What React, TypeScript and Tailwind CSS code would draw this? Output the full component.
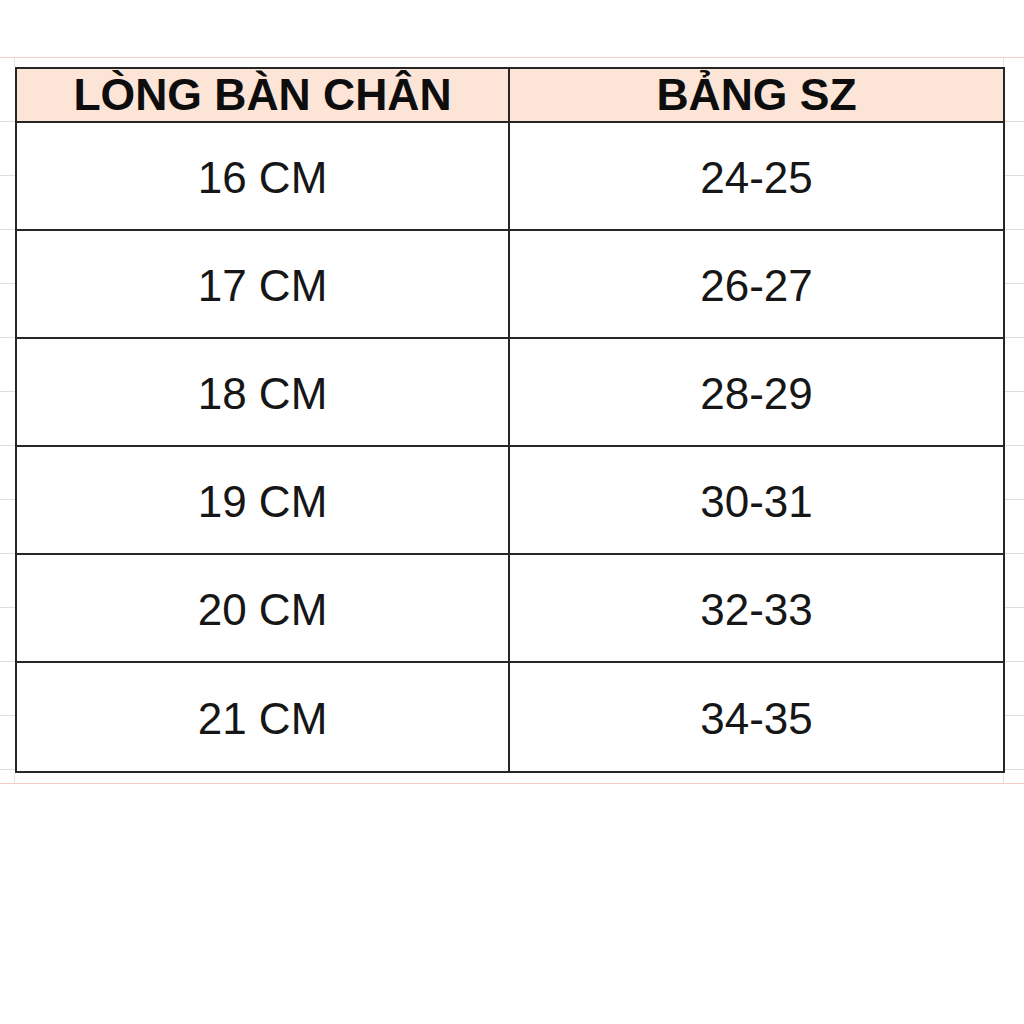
import React from "react";

const rows: [string, string][] = [
  ["16 CM", "24-25"],
  ["17 CM", "26-27"],
  ["18 CM", "28-29"],
  ["19 CM", "30-31"],
  ["20 CM", "32-33"],
  ["21 CM", "34-35"],
];

function MarginColumn({ className }: { className: string }) {
  return (
    <div className={"flex flex-col " + className}>
      <div className="h-[55px] border-b border-[#dedede]" />
      {Array.from({ length: 12 }).map((_, i) => (
        <div key={i} className="h-[54px] shrink-0 border-b border-[#dedede]" />
      ))}
    </div>
  );
}

export default function App() {
  return (
    <div
      className="w-[1024px] h-[1024px] bg-white overflow-hidden"
      style={{ fontFamily: '"Liberation Sans", Arial, sans-serif' }}
    >
      <div className="h-[57px]" />
      <div className="h-px bg-[#f4cccc]" />
      <div className="flex h-[9px]">
        <div className="w-[15px] border-r border-[#e2e2e2]" />
        <div className="w-[989px] border-r border-[#e2e2e2]" />
        <div className="flex-1" />
      </div>
      <div className="flex">
        <MarginColumn className="w-[15px]" />
        <div className="w-[990px] border-2 border-[#262626] flex flex-col">
          <div className="flex h-[54px] border-b-2 border-[#262626] bg-[#fce4d6]">
            <div className="w-[493px] border-r-2 border-[#262626] flex items-center justify-center text-[44.5px] leading-none font-bold text-[#0d0d0d]">
              LÒNG BÀN CHÂN
            </div>
            <div className="flex-1 flex items-center justify-center text-[44.5px] leading-none font-bold text-[#0d0d0d]">
              BẢNG SZ
            </div>
          </div>
          {rows.map(([a, b], i) => (
            <div
              key={a}
              className={
                "flex h-[108px] " +
                (i < rows.length - 1 ? "border-b-2 border-[#262626]" : "h-[106px]")
              }
            >
              <div className="w-[493px] border-r-2 border-[#262626] flex items-center justify-center pt-1 text-[44px] leading-none text-[#161616]">
                {a}
              </div>
              <div className="flex-1 flex items-center justify-center pt-1 text-[44px] leading-none text-[#161616]">
                {b}
              </div>
            </div>
          ))}
        </div>
        <MarginColumn className="flex-1" />
      </div>
      <div className="flex h-[10px]">
        <div className="w-[15px] border-r border-[#e2e2e2]" />
        <div className="w-[989px] border-r border-[#e2e2e2]" />
        <div className="flex-1" />
      </div>
      <div className="h-px bg-[#f4cccc]" />
    </div>
  );
}
